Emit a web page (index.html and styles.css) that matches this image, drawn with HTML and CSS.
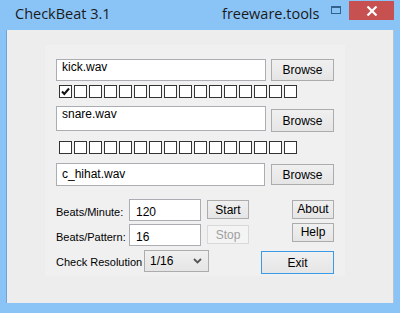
FILE: index.html
```html
<!DOCTYPE html>
<html>
<head>
<meta charset="utf-8">
<link rel="stylesheet" href="styles.css">
</head>
<body>
<div class="window">
  <div class="titlebar">
    <div class="title">CheckBeat 3.1</div>
    <div class="brand">freeware.tools</div>
    <div class="max-icon"></div>
    <div class="close">
      <svg width="12" height="10" viewBox="0 0 12 10"><path d="M1.5 0.5 L10.5 9.5 M10.5 0.5 L1.5 9.5" stroke="#fff" stroke-width="2.2" fill="none"/></svg>
    </div>
  </div>
  <div class="client">
    <div class="panel">
      <div class="file-row r1">
        <div class="field f1">kick.wav</div>
        <div class="btn browse b1">Browse</div>
      </div>
      <div class="checks c1">
        <div class="cb checked"><svg width="11" height="11" viewBox="0 0 11 11"><path d="M2 5.5 L4.3 8 L9 2.5" stroke="#111" stroke-width="2" fill="none"/></svg></div>
        <div class="cb"></div><div class="cb"></div><div class="cb"></div><div class="cb"></div>
        <div class="cb"></div><div class="cb"></div><div class="cb"></div><div class="cb"></div>
        <div class="cb"></div><div class="cb"></div><div class="cb"></div><div class="cb"></div>
        <div class="cb"></div><div class="cb"></div><div class="cb"></div>
      </div>
      <div class="file-row r2">
        <div class="field f2">snare.wav</div>
        <div class="btn browse b2">Browse</div>
      </div>
      <div class="checks c2">
        <div class="cb"></div><div class="cb"></div><div class="cb"></div><div class="cb"></div>
        <div class="cb"></div><div class="cb"></div><div class="cb"></div><div class="cb"></div>
        <div class="cb"></div><div class="cb"></div><div class="cb"></div><div class="cb"></div>
        <div class="cb"></div><div class="cb"></div><div class="cb"></div><div class="cb"></div>
      </div>
      <div class="file-row r3">
        <div class="field f3">c_hihat.wav</div>
        <div class="btn browse b3">Browse</div>
      </div>
      <div class="controls">
        <div class="label lbl1">Beats/Minute:</div>
        <div class="field small s1">120</div>
        <div class="btn start">Start</div>
        <div class="btn about">About</div>
        <div class="label lbl2">Beats/Pattern:</div>
        <div class="field small s2">16</div>
        <div class="btn stop">Stop</div>
        <div class="btn help">Help</div>
      </div>
      <div class="res-row">
        <div class="label lbl3">Check Resolution</div>
        <div class="select"><span>1/16</span>
          <svg width="9" height="6" viewBox="0 0 9 6"><path d="M1 1 L4.5 4.5 L8 1" stroke="#555" stroke-width="1.8" fill="none"/></svg>
        </div>
        <div class="btn exit">Exit</div>
      </div>
    </div>
  </div>
</div>
</body>
</html>
```
FILE: styles.css
```css
html, body {
  margin: 0;
  padding: 0;
}
body {
  width: 400px;
  height: 313px;
  overflow: hidden;
  background: #8ac4f7;
  font-family: "Liberation Sans", Arial, sans-serif;
  font-size: 12px;
  color: #000;
}
.window {
  width: 400px;
  height: 313px;
  display: flex;
  flex-direction: column;
}
.titlebar {
  height: 30px;
  display: flex;
  align-items: flex-start;
  flex-shrink: 0;
}
.title {
  width: 207px;
  margin-left: 15px;
  margin-top: 4px;
  font-family: "Open Sans", "Noto Sans", sans-serif;
  font-size: 14.5px;
  color: #1a1a1a;
  white-space: nowrap;
}
.brand {
  width: 109px;
  margin-top: 4px;
  font-family: "Open Sans", "Noto Sans", sans-serif;
  font-size: 14.5px;
  color: #1a1a1a;
  white-space: nowrap;
}
.max-icon {
  width: 8px;
  height: 5px;
  margin-top: 6px;
  border: 1px solid #35618d;
  border-top-width: 2px;
}
.close {
  width: 45px;
  height: 19px;
  margin-left: 8px;
  margin-top: 1px;
  background: #c75050;
  display: flex;
  align-items: center;
  justify-content: center;
}
.client {
  margin: 0 6px;
  height: 273px;
  background: #ededed;
  border-left: 1px solid #6ea6da;
  border-right: 1px solid #b7c4d0;
  padding: 15px 0 0 38px;
  box-sizing: border-box;
}
.panel {
  width: 300px;
  height: 231px;
  background: #f0f0f0;
  padding-left: 11px;
  padding-top: 14px;
  box-sizing: border-box;
}
.file-row {
  display: flex;
  align-items: flex-start;
}
.field {
  background: #fff;
  border: 1px solid #abadb3;
  box-sizing: border-box;
  padding-left: 5px;
  line-height: 14px;
  white-space: nowrap;
}
.f1 { width: 210px; height: 22px; }
.f2 { width: 210px; height: 25px; }
.f3 { width: 209px; height: 23px; padding-top: 3px; }
.btn {
  box-sizing: border-box;
  border: 1px solid #acacac;
  background: linear-gradient(#f0f0f0, #e5e5e5);
  display: flex;
  align-items: center;
  justify-content: center;
  color: #000;
  white-space: nowrap;
}
.browse { width: 63px; margin-left: 5px; }
.b1 { height: 22px; margin-top: 0; }
.b2 { height: 23px; margin-top: 3px; }
.b3 { height: 21px; margin-top: 1px; margin-left: 6px; }
.r2 { margin-top: 8px; }
.r3 { margin-top: 9px; }
.checks {
  display: flex;
  gap: 2px;
  padding-left: 3px;
}
.c1 { margin-top: 4px; }
.c2 { margin-top: 9px; }
.cb {
  width: 13px;
  height: 13px;
  box-sizing: border-box;
  border: 1px solid #333;
  background: #fff;
  display: flex;
  align-items: center;
  justify-content: center;
}
.controls {
  margin-top: 13px;
  display: grid;
  grid-template-columns: 73px 72px 6px 42px 43px 42px;
  grid-template-rows: 22px 22px;
  row-gap: 3px;
}
.label {
  font-size: 11px;
  line-height: 13px;
  white-space: nowrap;
}
.lbl1, .lbl2 { grid-column: 1; padding-top: 7px; }
.small { padding-left: 6px; padding-top: 5px; height: 22px; }
.s1, .s2 { grid-column: 2; }
.start { grid-column: 4; height: 19px; margin-top: 1px; }
.about { grid-column: 6; height: 19px; margin-top: 1px; padding-bottom: 2px; }
.stop {
  grid-column: 4;
  height: 19px;
  margin-top: 1px;
  border-color: #d9d9d9;
  background: #f4f4f4;
  color: #a0a0a0;
}
.help { grid-column: 6; height: 19px; margin-top: -1px; padding-bottom: 2px; }
.res-row {
  margin-top: 4px;
  display: flex;
  align-items: flex-start;
}
.lbl3 { width: 88px; padding-top: 6px; }
.select {
  width: 65px;
  height: 22px;
  box-sizing: border-box;
  border: 1px solid #acacac;
  background: linear-gradient(#f0f0f0, #e5e5e5);
  display: flex;
  align-items: center;
  justify-content: space-between;
  padding: 0 6px 0 5px;
}
.btn.exit {
  width: 73px;
  height: 23px;
  margin-left: 52px;
  margin-top: 1px;
  border-color: #3c9be8;
}
```
